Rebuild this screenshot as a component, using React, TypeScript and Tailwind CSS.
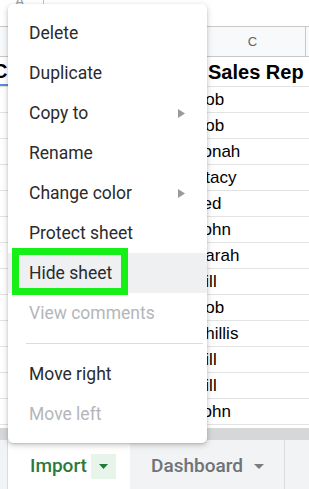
import React from "react";

const names = ["Bob", "Bob", "Jonah", "Stacy", "Ted", "John", "Sarah", "Bill", "Bob", "Phillis", "Bill", "Bill", "John"];

type Item = { label: string; arrow?: boolean; disabled?: boolean; highlight?: boolean };

const group1: Item[] = [
  { label: "Delete" },
  { label: "Duplicate" },
  { label: "Copy to", arrow: true },
  { label: "Rename" },
  { label: "Change color", arrow: true },
  { label: "Protect sheet" },
  { label: "Hide sheet", highlight: true },
  { label: "View comments", disabled: true },
];
const group2: Item[] = [{ label: "Move right" }, { label: "Move left", disabled: true }];

function MenuItem({ item }: { item: Item }) {
  return (
    <div
      className={
        "relative flex h-[40px] items-center justify-between pl-[21px] pr-[22px] text-[17.5px] " +
        (item.disabled ? "text-[#b4b6b9] " : "text-[#2a2b2e] ") +
        (item.highlight ? "bg-[#eef0f1]" : "")
      }
    >
      <span className="relative z-10">{item.label}</span>
      {item.arrow && (
        <svg width="7" height="9" viewBox="0 0 7 9" className="mt-[1px]">
          <path d="M0 0 L7 4.5 L0 9 Z" fill="#9a9a9a" />
        </svg>
      )}
      {item.highlight && (
        <div className="absolute left-[4px] top-[-5px] h-[47px] w-[116px] border-[7px] border-[#16f016]" />
      )}
    </div>
  );
}

export default function App() {
  return (
    <div
      className="relative h-[489px] w-[309px] overflow-hidden bg-white"
      style={{ fontFamily: '"Liberation Sans", Arial, sans-serif' }}
    >
      {/* toolbar strip */}
      <div className="flex h-[27px] items-start border-b border-[#c8c8c8]">
        <span className="ml-[15px] -mt-[9px] text-[14px] text-[#9aa0a6]">A</span>
        <div className="ml-[19px] h-[9px] w-px bg-[#c4c4c4]" />
      </div>

      {/* column header */}
      <div className="flex h-[30px] border-b border-[#c8c8c8] bg-[#f8f9fa]">
        <div className="w-[206px] shrink-0" />
        <div className="flex flex-1 items-center justify-center pr-[6px] text-[13px] text-[#5f6368]">C</div>
        <div className="w-px bg-[#c8c8c8]" />
        <div className="w-[3px]" />
      </div>

      {/* row 1 */}
      <div className="flex h-[30px] border-b border-[#e2e3e3]">
        <div className="flex w-[8px] shrink-0 items-center overflow-hidden border-b-2 border-[#5b8ad8]">
          <span className="-ml-[7px] text-[20px] font-bold text-black">C</span>
        </div>
        <div className="w-[200px] shrink-0" />
        <div className="flex flex-1 items-center text-[20px] font-bold text-black">Sales Rep</div>
      </div>

      {/* data rows */}
      {names.map((n, i) => (
        <div key={i} className="flex h-[26px] border-b border-[#e2e3e3]">
          <div className="w-[194px] shrink-0" />
          <div className="flex flex-1 items-center text-[17px] text-black">{n}</div>
        </div>
      ))}

      {/* scrollbar band */}
      <div className="mt-[3px] h-[12px] bg-[#d6d7d8]" />

      {/* sheet tabs */}
      <div className="flex h-[49px] bg-[#f1f3f4]" style={{ fontFamily: 'Roboto, "Noto Sans", sans-serif' }}>
        <div className="w-[8px] shrink-0 border-r border-[#dadce0]" />
        <div className="flex w-[122px] shrink-0 items-center bg-white pl-[22px] pt-[3px]">
          <span className="text-[19px] font-medium text-[#2a7a3c]">Import</span>
          <div className="ml-[4px] flex h-[25px] w-[25px] items-center justify-center bg-[#e6f4ea]">
            <svg width="9" height="5" viewBox="0 0 9 5">
              <path d="M0 0 L9 0 L4.5 5 Z" fill="#1e7b34" />
            </svg>
          </div>
        </div>
        <div className="flex w-[155px] shrink-0 items-center border-r border-[#dadce0] pl-[21px] pt-[3px]">
          <span className="text-[19px] font-medium text-[#6f7276]">Dashboard</span>
          <svg width="10" height="5" viewBox="0 0 10 5" className="ml-[11px]">
            <path d="M0 0 L10 0 L5 5 Z" fill="#7a7d80" />
          </svg>
        </div>
      </div>

      {/* context menu */}
      <div
        className="absolute left-[8px] top-[4px] w-[199px] rounded-[5px] bg-white py-[9px] shadow-[0_2px_6px_rgba(0,0,0,0.22),0_1px_2px_rgba(0,0,0,0.12)]"
        style={{ fontFamily: 'Roboto, "Noto Sans", sans-serif' }}
      >
        {group1.map((it) => (
          <MenuItem key={it.label} item={it} />
        ))}
        <div className="my-[10px] ml-[18px] mr-[4px] h-px bg-[#dadce0]" />
        {group2.map((it) => (
          <MenuItem key={it.label} item={it} />
        ))}
      </div>
    </div>
  );
}
